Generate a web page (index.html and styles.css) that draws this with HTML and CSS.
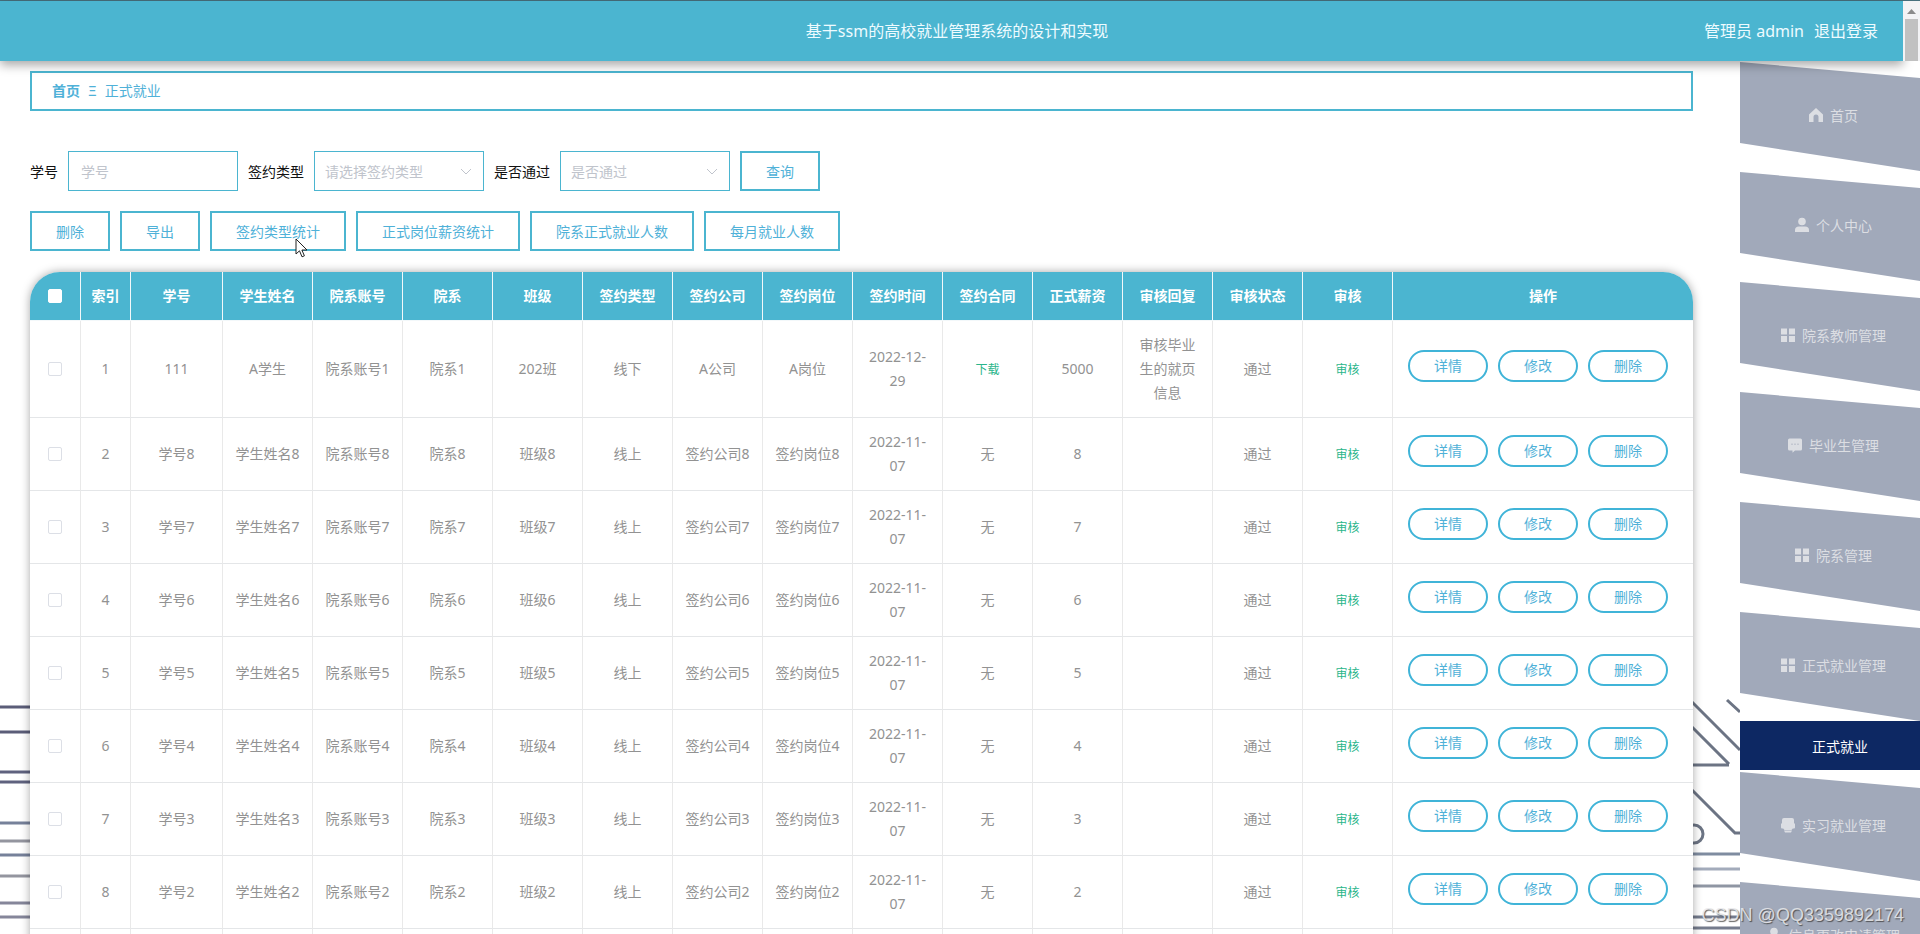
FILE: index.html
```html
<!DOCTYPE html>
<html lang="zh-CN">
<head>
<meta charset="utf-8">
<title>基于ssm的高校就业管理系统的设计和实现</title>
<link rel="stylesheet" href="styles.css">
</head>
<body>
<div class="app">
  <svg class="decor decor-left" width="30" height="240" viewBox="0 0 30 240" aria-hidden="true">
    <g stroke-width="3">
      <path d="M0 13H30M0 38H30" stroke="#5b5d78"/>
      <path d="M0 78H30M0 88H30" stroke="#5f627e"/>
      <path d="M0 129H30M0 161H30" stroke="#76819a"/>
      <path d="M0 147H30M0 182H30" stroke="#94959f"/>
      <path d="M0 209H30M0 223H30" stroke="#85869a"/>
    </g>
  </svg>
  <svg class="decor decor-right" width="48" height="240" viewBox="0 0 48 240" aria-hidden="true">
    <g stroke="#6c7484" stroke-width="3" fill="none">
      <path d="M0 8L48 56M35 6L48 18M0 33L37 70M0 71H37M0 96L43 139H48"/>
      <circle cx="2" cy="140" r="9"/>
      <path d="M0 160H48" stroke="#7f8ca0"/>
      <path d="M0 175H48" stroke="#a3abbb"/>
      <path d="M0 192H48" stroke="#8f96a3"/>
      <path d="M0 223H48M0 234H48" stroke="#747b8c"/>
    </g>
  </svg>

  <div class="topbar">
    <header class="header">
      <h1 class="header-title">基于ssm的高校就业管理系统的设计和实现</h1>
      <div class="header-user">
        <span>管理员 admin</span>
        <a class="logout" href="#">退出登录</a>
      </div>
    </header>
    <div class="scrollbar" aria-hidden="true">
      <svg width="9" height="5" viewBox="0 0 9 5"><path d="M4.500 0L9 5H0z" fill="#8b8b8b"/></svg>
      <div class="scroll-thumb"></div>
    </div>
  </div>

  <div class="body">
    <main class="main">
      <nav class="breadcrumb" aria-label="breadcrumb">
        <a class="crumb-home" href="#">首页</a>
        <span>Ξ</span>
        <span>正式就业</span>
      </nav>

      <form class="search">
        <label for="sno">学号</label>
        <input class="field" id="sno" type="text" placeholder="学号">
        <label for="stype">签约类型</label>
        <div class="select-wrap">
          <select class="field select" id="stype"><option>请选择签约类型</option></select>
          <svg class="chevron" width="12" height="7" viewBox="0 0 12 7"><path d="M1 1l5 5 5-5" fill="none" stroke="#c0c4cc"/></svg>
        </div>
        <label for="spass">是否通过</label>
        <div class="select-wrap">
          <select class="field select" id="spass"><option>是否通过</option></select>
          <svg class="chevron" width="12" height="7" viewBox="0 0 12 7"><path d="M1 1l5 5 5-5" fill="none" stroke="#c0c4cc"/></svg>
        </div>
        <button class="btn" type="button">查询</button>
      </form>

      <div class="actions">
        <button class="btn" type="button">删除</button>
        <button class="btn" type="button">导出</button>
        <button class="btn" type="button">签约类型统计</button>
        <button class="btn" type="button">正式岗位薪资统计</button>
        <button class="btn" type="button">院系正式就业人数</button>
        <button class="btn" type="button">每月就业人数</button>
      </div>

      <div class="table-card">
        <table class="table">
          <colgroup>
            <col class="col-check"><col class="col-index"><col>
            <col class="col-std" span="13"><col class="col-ops">
          </colgroup>
          <thead>
            <tr>
              <th><input class="check" type="checkbox" aria-label="全选"></th>
              <th>索引</th><th>学号</th><th>学生姓名</th><th>院系账号</th><th>院系</th><th>班级</th>
              <th>签约类型</th><th>签约公司</th><th>签约岗位</th><th>签约时间</th><th>签约合同</th>
              <th>正式薪资</th><th>审核回复</th><th>审核状态</th><th>审核</th><th>操作</th>
            </tr>
          </thead>
          <tbody id="rows"></tbody>
        </table>
      </div>
    </main>

    <aside class="sidebar">
      <ul class="menu">
        <li><a class="menu-item" href="#"><svg class="icon" viewBox="0 0 16 16"><path d="M8 1L15 7.500V15H10.500V10a2.500 2.500 0 0 0-5 0V15H1V7.500z"/></svg>首页</a></li>
        <li><a class="menu-item" href="#"><svg class="icon" viewBox="0 0 16 16"><circle cx="8" cy="4.500" r="3.800"/><path d="M1 15v-2q0-3.500 4-3.500h6q4 0 4 3.500v2z"/></svg>个人中心</a></li>
        <li><a class="menu-item" href="#"><svg class="icon" viewBox="0 0 16 16"><path d="M1 1.500h6v6H1zM9 1.500h6v6H9zM1 9h6v6H1zM9 9h6v6H9z"/></svg>院系教师管理</a></li>
        <li><a class="menu-item" href="#"><svg class="icon" viewBox="0 0 16 16"><path d="M2.500 1.500h11q1.500 0 1.500 1.500v9q0 1.500-1.500 1.500H8L5.500 15.800V13.500h-3Q1 13.500 1 12V3q0-1.500 1.500-1.500z"/><path class="icon-cut" d="M4 6.500h2v1.500H4zM7 6.500h2v1.500H7zM10 6.500h2v1.500h-2z"/></svg>毕业生管理</a></li>
        <li><a class="menu-item" href="#"><svg class="icon" viewBox="0 0 16 16"><path d="M1 1.500h6v6H1zM9 1.500h6v6H9zM1 9h6v6H1zM9 9h6v6H9z"/></svg>院系管理</a></li>
        <li>
          <a class="menu-item" href="#"><svg class="icon" viewBox="0 0 16 16"><path d="M1 1.500h6v6H1zM9 1.500h6v6H9zM1 9h6v6H1zM9 9h6v6H9z"/></svg>正式就业管理</a>
          <a class="submenu-item" href="#">正式就业</a>
        </li>
        <li><a class="menu-item" href="#"><svg class="icon" viewBox="0 0 16 16"><path d="M4 1h8q2 0 2 2v3l1 1v3.500q0 1-1 1h-1.200l-1.300 1.500h-7l-1.300-1.500H2q-1 0-1-1V7l1-1V3q0-2 2-2z"/><path d="M4 13.500h8l-1 2H5z"/></svg>实习就业管理</a></li>
        <li><a class="menu-item" href="#"><svg class="icon" viewBox="0 0 16 16"><circle cx="8" cy="4.500" r="3.800"/><path d="M1 15v-2q0-3.500 4-3.500h6q4 0 4 3.500v2z"/></svg>信息更改申请管理</a></li>
      </ul>
    </aside>
  </div>

  <svg class="cursor" width="13" height="20" viewBox="0 0 13 20" aria-hidden="true"><path d="M1 1v15l3.500-3.200 2.500 6 2.400-1-2.500-5.800H12z" fill="#fff" stroke="#222"/></svg>
  <div class="watermark">CSDN @QQ3359892174</div>
</div>
<script src="app.js"></script>
</body>
</html>
```

FILE: styles.css
```css
* {
  box-sizing: border-box;
}

body {
  margin: 0;
  font-family: "Noto Sans", "Noto Sans CJK SC", sans-serif;
  font-size: 14px;
  color: #111;
  background: #fff;
}

a {
  color: inherit;
  text-decoration: none;
}

button,
input,
select {
  font: inherit;
}

.app {
  position: relative;
  height: 100vh;
  overflow: hidden;
}

.decor {
  position: absolute;
  bottom: 0;
}

.decor-left {
  left: 0;
}

.decor-right {
  right: 180px;
}

/* top bar */
.topbar {
  position: relative;
  z-index: 2;
  display: flex;
  border-top: 1px solid #47707d;
}

.header {
  flex: 1;
  display: grid;
  grid-template-columns: 1fr auto 1fr;
  align-items: center;
  height: 60px;
  padding: 0 25px 2px 36px;
  color: #eefbff;
  font-size: 16px;
  background: #4bb5d0;
  box-shadow: 0 4px 10px rgba(0, 0, 0, 0.35);
}

.header-title {
  grid-column: 2;
  margin: 0;
  font-size: 16px;
  font-weight: 400;
}

.header-user {
  display: flex;
  justify-content: flex-end;
  gap: 10px;
}

.scrollbar {
  display: flex;
  flex-direction: column;
  align-items: center;
  gap: 5px;
  width: 17px;
  padding-top: 8px;
  background: #f3f3f5;
}

.scroll-thumb {
  flex: 1;
  width: 13px;
  background: #c1c1c1;
}

/* layout */
.body {
  position: relative;
  display: flex;
  align-items: flex-start;
}

.main {
  flex: 1;
  min-width: 0;
  padding: 10px 47px 0 30px;
}

.breadcrumb {
  display: flex;
  align-items: center;
  gap: 8px;
  height: 40px;
  margin-bottom: 40px;
  padding: 0 20px 2px;
  color: #4fb1d8;
  background: #fff;
  border: 2px solid #4bb5d0;
}

.crumb-home {
  font-weight: 700;
}

.search,
.actions {
  display: flex;
  align-items: center;
  gap: 10px;
  margin-bottom: 20px;
}

.actions {
  margin-bottom: 21px;
}

.field {
  width: 170px;
  height: 40px;
  padding: 0 12px;
  color: #c0c4cc;
  background: #fff;
  border: 1px solid #4bb5d0;
  border-radius: 0;
}

.field::placeholder {
  color: #c0c4cc;
}

.select-wrap {
  position: relative;
}

.select {
  display: block;
  padding: 0 10px;
  appearance: none;
}

.chevron {
  position: absolute;
  top: 17px;
  right: 12px;
  pointer-events: none;
}

.btn {
  height: 40px;
  padding: 0 24px;
  color: #4fb1d8;
  background: #fff;
  border: 2px solid #4bb5d0;
}

/* table */
.table-card {
  overflow: hidden;
  background: #fff;
  border-radius: 30px 30px 0 0;
  box-shadow: 0 0 10px rgba(0, 0, 0, 0.35);
}

.table {
  width: 100%;
  table-layout: fixed;
  border-collapse: separate;
  border-spacing: 0;
  line-height: 24px;
  text-align: center;
}

.col-check {
  width: 51px;
}

.col-index {
  width: 50px;
}

.col-std {
  width: 90px;
}

.col-ops {
  width: 300px;
}

.table th {
  height: 49px;
  padding: 0;
  color: #fff;
  font-weight: 700;
  background: #4bb5d0;
  border-right: 1px solid #f3f8fa;
  border-bottom: 1px solid #f3f8fa;
}

.table td {
  padding: 12px 10px;
  color: #929292;
  border-right: 1px solid #e9e9e9;
  border-bottom: 1px solid #e4e6e8;
}

.table th:last-child,
.table td:last-child {
  border-right: 0;
}

.check {
  display: block;
  width: 14px;
  height: 14px;
  margin: 0 auto;
  appearance: none;
  background: #fff;
  border: 1px solid #dcdfe6;
  border-radius: 2px;
}

th .check {
  border-color: #fff;
}

.link {
  padding: 0;
  color: #2ab58a;
  font-size: 12px;
  background: none;
  border: 0;
}

.table .ops {
  padding: 0 15px;
}

.ops-row {
  display: flex;
  gap: 10px;
  margin-bottom: 6px;
}

.pill {
  width: 80px;
  height: 32px;
  padding: 0;
  color: #4fb1d8;
  background: #fff;
  border: 2px solid #40b4d8;
  border-radius: 16px;
}

/* sidebar */
.sidebar {
  width: 180px;
  padding-top: 1px;
  background: #fff;
}

.menu {
  margin: 0;
  padding: 0;
  list-style: none;
}

.menu li {
  padding-bottom: 1px;
}

.menu-item {
  display: flex;
  align-items: center;
  justify-content: center;
  gap: 6px;
  height: 109px;
  padding: 0 0 3px 6px;
  color: #dcdee3;
  background: #a1a9ba;
  clip-path: polygon(0 0, 100% 16px, 100% 100%, 0 81px);
}

.submenu-item {
  display: flex;
  align-items: center;
  justify-content: center;
  height: 49px;
  margin-bottom: 1px;
  padding-left: 20px;
  color: #fff;
  background: #0d2863;
}

.icon {
  width: 16px;
  height: 16px;
  fill: #dcdee3;
}

.icon-cut {
  fill: #c3c7d1;
}

/* overlays */
.cursor {
  position: absolute;
  top: 238px;
  left: 295px;
}

.watermark {
  position: absolute;
  right: 16px;
  bottom: 8px;
  color: rgba(235, 235, 238, 0.85);
  font-family: "Liberation Sans", sans-serif;
  font-size: 18px;
  text-shadow: 1px 1px 1px rgba(60, 60, 60, 0.8);
}
```

FILE: app.js
```js
const records = [
  ["111", "A学生", "院系账号1", "院系1", "202班", "线下", "A公司", "A岗位", "2022-12-29", "下载", "5000", "审核毕业生的就页信息", "通过"]
];
for (let n = 8; n > 1; n--) {
  records.push(["学号" + n, "学生姓名" + n, "院系账号" + n, "院系" + n, "班级" + n, "线上",
    "签约公司" + n, "签约岗位" + n, "2022-11-07", "无", String(n), "", "通过"]);
}

const cell = (value) =>
  value === "下载" ? '<td><button class="link" type="button">下载</button></td>' : `<td>${value}</td>`;

const row = (record, i) => `
  <tr>
    <td><input class="check" type="checkbox" aria-label="选择第${i + 1}行"></td>
    <td>${i + 1}</td>
    ${record.map(cell).join("")}
    <td><button class="link" type="button">审核</button></td>
    <td class="ops"><div class="ops-row">
      <button class="pill" type="button">详情</button>
      <button class="pill" type="button">修改</button>
      <button class="pill" type="button">删除</button>
    </div></td>
  </tr>`;

document.getElementById("rows").innerHTML =
  records.map(row).join("") + "<tr>" + "<td></td>".repeat(17) + "</tr>";
```
